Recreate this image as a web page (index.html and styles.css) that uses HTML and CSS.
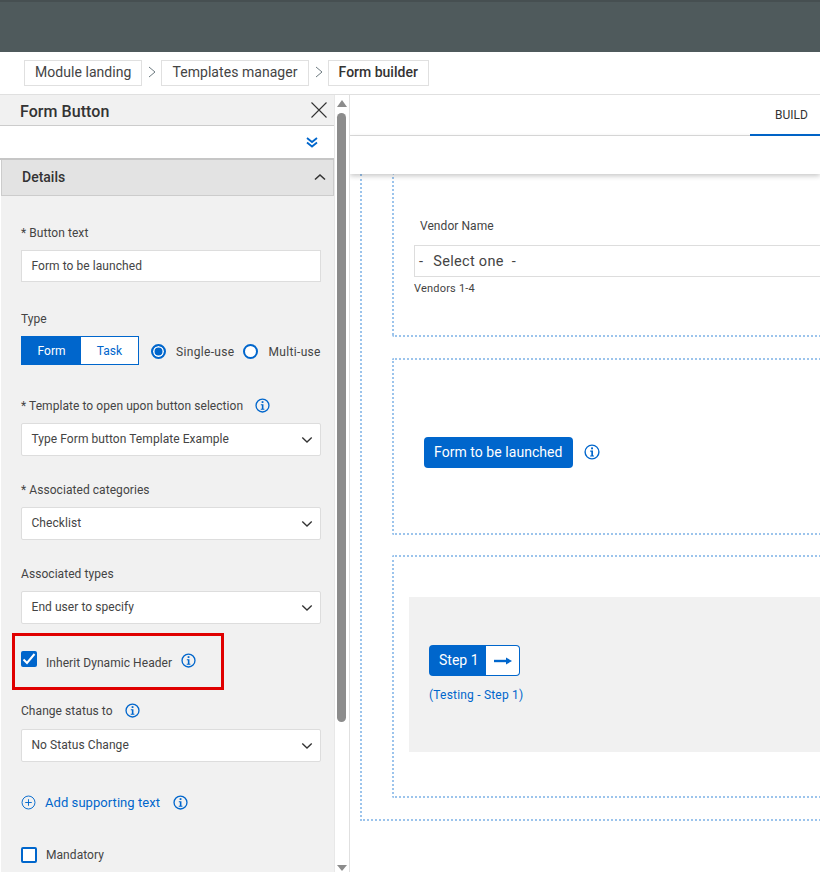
FILE: index.html
```html
<!DOCTYPE html>
<html lang="en">
<head>
<meta charset="utf-8">
<title>Form builder</title>
<link rel="stylesheet" href="styles.css">
</head>
<body>
<svg class="defs" width="0" height="0" aria-hidden="true">
  <symbol id="info" viewBox="0 0 16 16">
    <circle cx="8" cy="8" r="6.9" fill="none" stroke="currentColor" stroke-width="1.4"/>
    <rect x="7.1" y="3.4" width="1.9" height="1.9" fill="currentColor"/>
    <path d="M6.2 6.6h2.800v4.800h1v1.100H6.100v-1.100h1.200V7.700H6.200z" fill="currentColor"/>
  </symbol>
  <symbol id="chev" viewBox="0 0 14 8">
    <path d="M1.5 1.2 7 6.4l5.500-5.200" fill="none" stroke="currentColor" stroke-width="1.600"/>
  </symbol>
</svg>
<header class="topbar"></header>
<nav class="crumbs">
  <span class="crumb">Module landing</span>
  <svg class="sep" viewBox="0 0 8 12"><path d="M1 1l6 5-6 5" fill="none" stroke="#6d7a80" stroke-width="1"/></svg>
  <span class="crumb">Templates manager</span>
  <svg class="sep" viewBox="0 0 8 12"><path d="M1 1l6 5-6 5" fill="none" stroke="#6d7a80" stroke-width="1"/></svg>
  <span class="crumb crumb-current">Form builder</span>
</nav>
<main class="workspace">
  <aside class="side">
    <div class="side-panel">
      <div class="side-head">
        <h1 class="side-title">Form Button</h1>
        <svg class="close" viewBox="0 0 16 16"><path d="M.5.5l15 15M15.500.5l-15 15" fill="none" stroke="#333" stroke-width="1.100"/></svg>
      </div>
      <div class="side-tools">
        <svg class="dbl" viewBox="0 0 12 11"><path d="M1 1l5 4 5-4M1 5.500l5 4 5-4" fill="none" stroke="#0066cc" stroke-width="1.800"/></svg>
      </div>
      <div class="details-head">
        <span class="details-title">Details</span>
        <svg class="up" viewBox="0 0 14 8"><path d="M2 6.500 7 2l5 4.500" fill="none" stroke="#333" stroke-width="1.600"/></svg>
      </div>
      <div class="details">
        <label class="lbl lbl-first">* Button text</label>
        <div class="input">Form to be launched</div>

        <div class="lbl lbl-type">Type</div>
        <div class="type-row">
          <div class="seg"><span class="seg-on">Form</span><span class="seg-off">Task</span></div>
          <span class="radio radio-on"></span><span class="radio-text">Single-use</span>
          <span class="radio radio-second"></span><span class="radio-text">Multi-use</span>
        </div>

        <div class="lbl lbl-tpl">* Template to open upon button selection<svg class="info info-l"><use href="#info"/></svg></div>
        <div class="select">Type Form button Template Example<svg class="chev"><use href="#chev"/></svg></div>

        <div class="lbl lbl-next">* Associated categories</div>
        <div class="select">Checklist<svg class="chev"><use href="#chev"/></svg></div>

        <div class="lbl lbl-next">Associated types</div>
        <div class="select">End user to specify<svg class="chev"><use href="#chev"/></svg></div>

        <div class="inherit">
          <span class="check">
            <svg viewBox="0 0 16 16"><path d="M2.500 8.500l3.500 3.500 7.500-9" fill="none" stroke="#fff" stroke-width="2"/></svg>
          </span>
          <span class="check-text check-text-low">Inherit Dynamic Header</span>
          <svg class="info info-c"><use href="#info"/></svg>
          <span class="highlight"></span>
        </div>

        <div class="lbl lbl-status">Change status to<svg class="info info-s"><use href="#info"/></svg></div>
        <div class="select">No Status Change<svg class="chev"><use href="#chev"/></svg></div>

        <div class="add">
          <svg class="plus" viewBox="0 0 16 16"><circle cx="8" cy="8" r="6.900" fill="none" stroke="#0066cc" stroke-width="1"/><path d="M8 4.500v7M4.500 8h7" stroke="#0066cc" stroke-width="1"/></svg>
          <span class="add-text">Add supporting text</span>
          <svg class="info info-a"><use href="#info"/></svg>
        </div>

        <div class="mand"><span class="check check-off"></span><span class="check-text">Mandatory</span></div>
      </div>
    </div>
    <div class="scroll">
      <span class="arrow-up"></span>
      <span class="thumb"></span>
      <span class="arrow-down"></span>
    </div>
  </aside>
  <section class="canvas-col">
    <div class="tabs"><span class="tab">BUILD</span></div>
    <div class="toolbar"></div>
    <div class="canvas">
      <div class="outer">
        <div class="box box-vendor">
          <div class="vendor-label">Vendor Name</div>
          <div class="vendor-select"><span>-</span><span>Select one</span><span class="dash-end">-</span></div>
          <div class="vendor-hint">Vendors 1-4</div>
        </div>
        <div class="box box-button">
          <span class="launch">Form to be launched</span>
          <svg class="info info-b"><use href="#info"/></svg>
        </div>
        <div class="box box-step">
          <div class="step-bg">
            <div class="step">
              <span class="step-name">Step 1</span>
              <span class="step-go"><svg viewBox="0 0 18 8"><path d="M0 4h13" stroke="#0066cc" stroke-width="2.400"/><path d="M12 .5 18 4l-6 3.500z" fill="#0066cc"/></svg></span>
            </div>
            <div class="step-link">(Testing - Step 1)</div>
          </div>
        </div>
      </div>
    </div>
  </section>
</main>
</body>
</html>
```
FILE: styles.css
```css
* { box-sizing: border-box; }
html, body { margin: 0; height: 100%; }
body {
  width: 820px;
  height: 872px;
  overflow: hidden;
  background: #fff;
  color: #444;
  font-family: Roboto, "Liberation Sans", sans-serif;
  font-size: 12px;
}
.defs { position: absolute; }
.topbar {
  height: 52px;
  background: #4f5a5c;
  border-top: 2px solid #464f51;
}
.crumbs {
  height: 43px;
  display: flex;
  align-items: flex-start;
  padding: 8px 0 0 24px;
  border-bottom: 1px solid #e0e0e0;
  background: #fff;
}
.crumb {
  height: 26px;
  line-height: 22px;
  padding: 0 10px;
  border: 1px solid #e0e0e0;
  font-size: 14px;
  color: #444;
  letter-spacing: .05px;
}
.crumb-current { font-weight: 500; color: #333; letter-spacing: 0; }
.sep { width: 8px; height: 12px; margin: 6px 5px 0 6px; flex: none; }
.workspace { display: flex; height: 777px; }
.side { width: 350px; flex: none; display: flex; border-right: 1px solid #e0e0e0; }
.side-panel { width: 335px; flex: none; overflow: hidden; border-right: 1px solid #e8e8e8; }
.side-head {
  height: 31px;
  background: #f1f1f1;
  border-bottom: 1px solid #ccc;
  display: flex;
  align-items: center;
  justify-content: space-between;
  padding: 0 7px 0 20px;
}
.side-title { margin: 2px 0 0; font-size: 16px; font-weight: 500; color: #333; letter-spacing: .06px; }
.close { width: 16px; height: 16px; margin-top: -1px; }
.side-tools {
  height: 34px;
  background: #fff;
  border-bottom: 2px solid #c6c6c6;
  display: flex;
  align-items: center;
  justify-content: flex-end;
  padding: 0 16px 0 0;
}
.dbl { width: 12px; height: 11px; }
.details-head {
  height: 36px;
  margin-left: 1px;
  background: #e3e3e3;
  border: 1px solid #ccc;
  border-top: 0;
  display: flex;
  align-items: center;
  justify-content: space-between;
  padding: 0 6px 0 20px;
  font-size: 14px;
  font-weight: 500;
  color: #333;
}
.details-title { margin-top: -2px; }
.up { width: 14px; height: 8px; margin-top: -2px; }
.details {
  background: #f1f1f1;
  height: 680px;
  margin-left: 1px;
  padding: 30px 13px 0 20px;
  font-size: 12px;
  letter-spacing: .06px;
}
.lbl {
  display: flex;
  align-items: center;
  height: 14px;
  color: #444;
  font-size: 12px;
}
.lbl-first { margin-bottom: 10px; }
.lbl-type { margin-top: 30px; margin-bottom: 10px; }
.lbl-tpl { margin-top: 34px; margin-bottom: 10px; }
.lbl-next { margin-top: 27px; margin-bottom: 10px; }
.input, .select {
  width: 300px;
  height: 33px;
  background: #fff;
  border: 1px solid #ddd;
  padding: 0 9.500px;
  color: #444;
  position: relative;
}
.select { border-radius: 2px; display: flex; align-items: center; justify-content: space-between; padding-right: 7px; padding-bottom: 2px; }
.select .chev { margin-top: 2px; }
.input { height: 32px; line-height: 31px; }
.chev { width: 12px; height: 8px; color: #333; }
.type-row { display: flex; align-items: center; height: 29px; }
.seg { display: flex; width: 118px; height: 29px; border: 1px solid #0066cc; }
.seg span { display: flex; align-items: center; justify-content: center; padding-top: 1px; }
.seg-on { width: 59px; background: #0066cc; color: #fff; }
.seg-off { flex: 1; background: #fff; color: #0066cc; }
.radio {
  width: 15px;
  height: 15px;
  border: 2px solid #0066cc;
  border-radius: 50%;
  margin: 1px 10px 0 12px;
  background: #fff;
  flex: none;
}
.radio-on { background: #0066cc; box-shadow: inset 0 0 0 1.500px #fff; }
.radio-second { margin-left: 9px; }
.radio-text { white-space: nowrap; letter-spacing: .33px; margin-top: 2px; }
.info { width: 15px; height: 15px; color: #0066cc; flex: none; }
.info-l { margin-left: 12px; margin-top: -2px; }
.info-c { margin-left: 9px; margin-top: -4px; }
.info-s { margin-left: 12px; margin-top: -1px; }
.info-a { margin-left: 13px; }
.info-b { width: 16px; height: 16px; margin-left: 11px; margin-top: 7px; }
.inherit { position: relative; display: flex; align-items: center; height: 16px; margin-top: 30px; }
.lbl-status { margin-top: 34px; margin-bottom: 11px; }
.check {
  width: 16px;
  height: 16px;
  border-radius: 2px;
  background: #0066cc;
  flex: none;
  display: block;
  margin-top: -6px;
}
.check svg { display: block; width: 16px; height: 16px; }
.check-off { background: #fff; border: 2px solid #0066cc; margin-top: 0; }
.check-text { margin-left: 9px; }
.check-text-low { margin-top: 2px; }
.highlight {
  position: absolute;
  left: -9px;
  top: -21px;
  width: 212px;
  height: 57px;
  border: 3px solid #e00000;
}
.add { display: flex; align-items: center; margin-top: 32px; height: 16px; color: #0066cc; }
.plus { width: 15px; height: 15px; flex: none; }
.add-text { margin-left: 9px; font-size: 13px; }
.mand { display: flex; align-items: center; margin-top: 37px; height: 16px; }
.scroll { width: 14px; flex: none; position: relative; background: #fff; }
.thumb {
  position: absolute;
  left: 2px;
  top: 18px;
  width: 9px;
  height: 609px;
  background: #8c8c8c;
  border-radius: 5px;
}
.arrow-up, .arrow-down {
  position: absolute;
  left: 2px;
  width: 0;
  height: 0;
  border-left: 5px solid transparent;
  border-right: 5px solid transparent;
}
.arrow-up { top: 5px; border-bottom: 7px solid #8c8c8c; }
.arrow-down { bottom: 1px; border-top: 6px solid #8c8c8c; }
.canvas-col { flex: 1; min-width: 0; overflow: hidden; position: relative; }
.tabs {
  height: 41px;
  border-bottom: 1px solid #ddd;
  display: flex;
  justify-content: flex-end;
  background: #fff;
}
.tab {
  width: 70px;
  height: 40px;
  padding: 13px 0 0 25px;
  border-bottom: 1px solid #0066cc;
  box-shadow: 0 1px 0 #0066cc;
  color: #333;
}
.toolbar {
  height: 38px;
  background: #fff;
  box-shadow: 0 2px 5px rgba(0, 0, 0, .22);
  position: relative;
  z-index: 1;
}
.canvas { padding: 0 0 0 10px; height: 698px; overflow: hidden; }
.outer {
  width: 700px;
  height: 647px;
  border-left: 2px dotted #9cc4ec;
  border-bottom: 2px dotted #9cc4ec;
  padding-left: 30px;
}
.box {
  width: 640px;
  border: 2px dotted #9cc4ec;
  border-radius: 2px;
}
.box-vendor { height: 163px; border-top: 0; padding: 45px 0 0 20px; }
.vendor-label { margin-left: 6px; color: #444; letter-spacing: .06px; }
.vendor-select {
  margin-top: 12px;
  height: 32px;
  border: 1px solid #ddd;
  width: 600px;
  display: flex;
  align-items: center;
  gap: 10px;
  padding-left: 4px;
  font-size: 14.500px;
  letter-spacing: .3px;
  color: #444;
}
.dash-end { margin-left: -2px; }
.vendor-hint { font-size: 11px; margin-top: 5px; color: #444; letter-spacing: .2px; }
.box-button {
  height: 177px;
  margin-top: 21px;
  display: flex;
  align-items: flex-start;
  padding: 77px 0 0 30px;
}
.launch {
  height: 31px;
  line-height: 30px;
  padding: 0 10px;
  background: #0066cc;
  color: #fff;
  border-radius: 4px;
  font-size: 14px;
  letter-spacing: .05px;
}
.box-step { height: 243px; margin-top: 20px; padding: 40px 0 0 15px; }
.step-bg { height: 155px; background: #f1f1f1; padding: 48px 0 0 20px; }
.step { display: flex; width: 91px; height: 31px; }
.step-name {
  width: 57px;
  background: #0066cc;
  color: #fff;
  border-radius: 4px 0 0 4px;
  font-size: 14px;
  line-height: 30px;
  padding-left: 10px;
}
.step-go {
  flex: 1;
  background: #fff;
  border: 1px solid #0066cc;
  border-left: 0;
  border-radius: 0 4px 4px 0;
  display: flex;
  align-items: center;
  justify-content: center;
}
.step-go svg { width: 18px; height: 8px; }
.step-link { margin-top: 12px; color: #0066cc; letter-spacing: .2px; }
```
